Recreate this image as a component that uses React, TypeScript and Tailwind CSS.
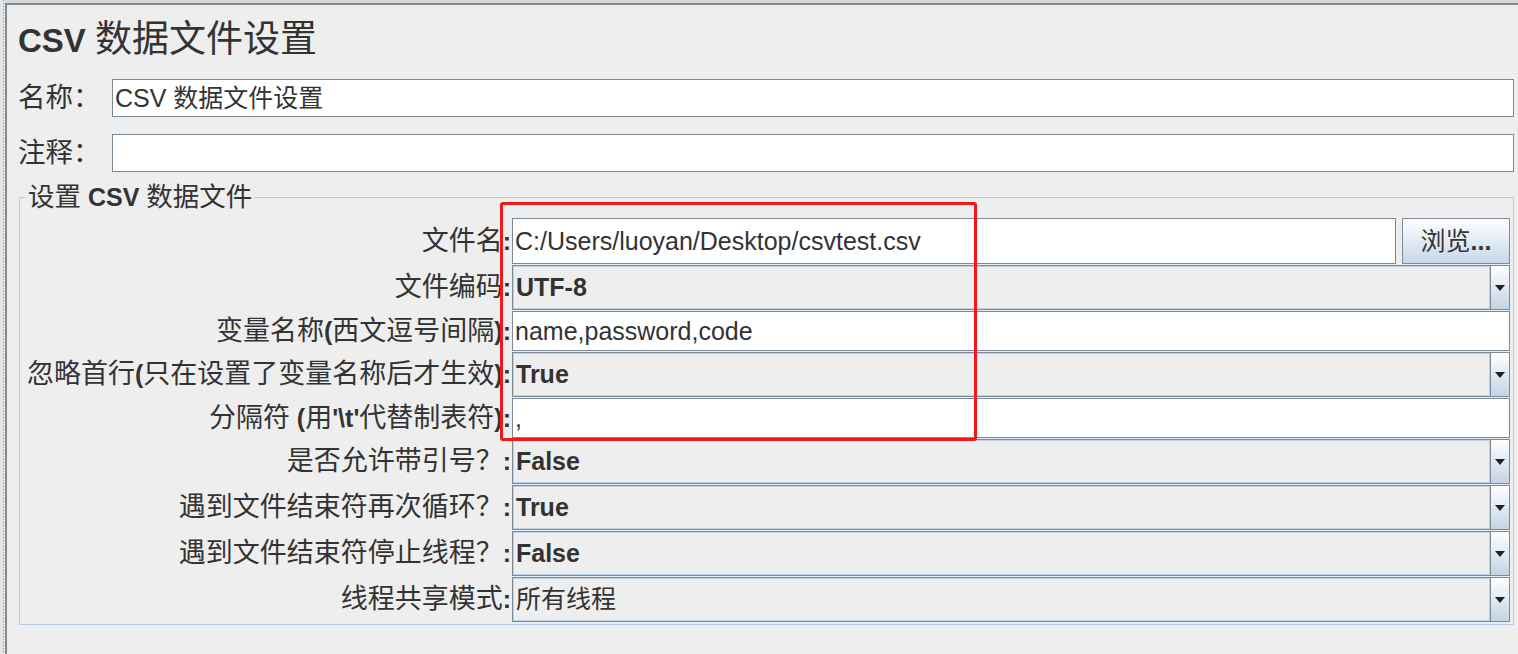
import React from 'react';

const CJK = /[\u3000-\u303f\u4e00-\u9fff\uff00-\uffef]/;

// split text into CJK and latin runs, so latin can be bold while CJK stays regular
const Mixed = ({ text, bold = false, cjk = 'text-[27px]' }: { text: string; bold?: boolean; cjk?: string }) => {
  const runs: { s: string; c: boolean }[] = [];
  for (const ch of text) {
    const c = CJK.test(ch);
    const last = runs[runs.length - 1];
    if (last && last.c === c) last.s += ch;
    else runs.push({ s: ch, c });
  }
  return (
    <span className="whitespace-pre">
      {runs.map((r, i) =>
        r.c ? (
          <span key={i} className={`${cjk} font-normal`}>{r.s}</span>
        ) : (
          <span key={i} className={bold ? 'font-bold' : 'font-normal'}>{r.s}</span>
        )
      )}
    </span>
  );
};

const Arrow = () => (
  <div className="w-[19px] h-full border-l border-[#7a8a99] bg-gradient-to-b from-white to-[#c3d4e6] flex items-center justify-center">
    <svg width="10" height="6" viewBox="0 0 10 6">
      <path d="M0 0h10L5 6z" fill="#222" />
    </svg>
  </div>
);

const TextField = ({ value, h }: { value: string; h: string }) => (
  <div className={`flex-1 ${h} bg-white border border-[#7a8a99] flex items-center pl-[2px] text-[25px] leading-none whitespace-nowrap`}>
    <Mixed text={value} cjk="text-[25px]" />
  </div>
);

const Combo = ({ value, bold = true }: { value: string; bold?: boolean }) => (
  <div className="flex-1 h-[45px] bg-[#eeeeee] border border-[#7a8a99] flex items-stretch">
    <div className="flex-1 flex items-center pl-[3px] text-[25px] leading-none shadow-[inset_1px_1px_0_#bfd1e4,inset_-1px_-1px_0_#bfd1e4]">
      <Mixed text={value} bold={bold} cjk="text-[25px]" />
    </div>
    <Arrow />
  </div>
);

const Row = ({ label, children }: { label: string; children: React.ReactNode }) => (
  <div className="flex items-center">
    <div className="w-[492px] text-right text-[25px] leading-none whitespace-nowrap pr-[1px]">
      <Mixed text={label} bold />
    </div>
    <div className="flex-1 flex items-center gap-[6px]">{children}</div>
  </div>
);

export default function App() {
  return (
    <div
      className="relative flex w-[1518px] h-[654px] overflow-hidden bg-[#eeeeee] text-[#333333]"
      style={{ fontFamily: '"Liberation Sans", "Noto Sans CJK SC", sans-serif' }}
    >
      {/* dotted splitter on the left */}
      <div className="w-[5px] h-full bg-[#e4e4e4] flex justify-center">
        <div className="w-[1px] h-full ml-[1px] bg-[repeating-linear-gradient(to_bottom,#8c8c8c_0px,#8c8c8c_1px,transparent_1px,transparent_3px)]" />
      </div>

      <div className="flex-1 flex flex-col">
        <div className="h-[3px] bg-[#d8d8d8]" />
        <div className="flex-1 border-t-2 border-l-2 border-[#7a8a99] pl-[11px] pr-[4px]">
          <h1 className="mt-[15px] h-[40px] leading-[40px] text-[33px] whitespace-nowrap">
            <Mixed text="CSV 数据文件设置" bold cjk="text-[37px]" />
          </h1>

          <div className="mt-[19px] flex items-center">
            <div className="w-[94px] text-[27.5px] leading-none">名称：</div>
            <TextField value="CSV 数据文件设置" h="h-[38px]" />
          </div>
          <div className="mt-[17px] flex items-center">
            <div className="w-[94px] text-[27.5px] leading-none">注释：</div>
            <TextField value="" h="h-[38px]" />
          </div>

          <fieldset className="mt-[11px] ml-[1px] border border-[#b9cbe0] pr-[3px] pt-[7px] pb-[2px] flex flex-col gap-[1px]">
            <legend className="ml-[6px] px-[2px] h-[28px] leading-[28px] text-[25px] whitespace-nowrap">
              <Mixed text="设置 CSV 数据文件" bold cjk="text-[26.5px]" />
            </legend>

            <Row label="文件名:">
              <TextField value="C:/Users/luoyan/Desktop/csvtest.csv" h="h-[46px]" />
              <button className="w-[108px] h-[46px] border border-[#7a8a99] bg-gradient-to-b from-white to-[#c6d7ea] text-[25px] leading-none whitespace-nowrap">
                <Mixed text="浏览..." bold cjk="text-[25px]" />
              </button>
            </Row>
            <Row label="文件编码:">
              <Combo value="UTF-8" />
            </Row>
            <Row label="变量名称(西文逗号间隔):">
              <TextField value="name,password,code" h="h-[40px]" />
            </Row>
            <Row label="忽略首行(只在设置了变量名称后才生效):">
              <Combo value="True" />
            </Row>
            <Row label={"分隔符 (用'\\t'代替制表符):"}>
              <TextField value="," h="h-[40px]" />
            </Row>
            <Row label="是否允许带引号？:">
              <Combo value="False" />
            </Row>
            <Row label="遇到文件结束符再次循环？:">
              <Combo value="True" />
            </Row>
            <Row label="遇到文件结束符停止线程？:">
              <Combo value="False" />
            </Row>
            <Row label="线程共享模式:">
              <Combo value="所有线程" bold={false} />
            </Row>
          </fieldset>
        </div>
      </div>

      {/* red annotation box */}
      <div className="absolute left-[500px] top-[202px] w-[477px] h-[239px] border-[3px] border-[#f01818] rounded-[3px] pointer-events-none" />
    </div>
  );
}
